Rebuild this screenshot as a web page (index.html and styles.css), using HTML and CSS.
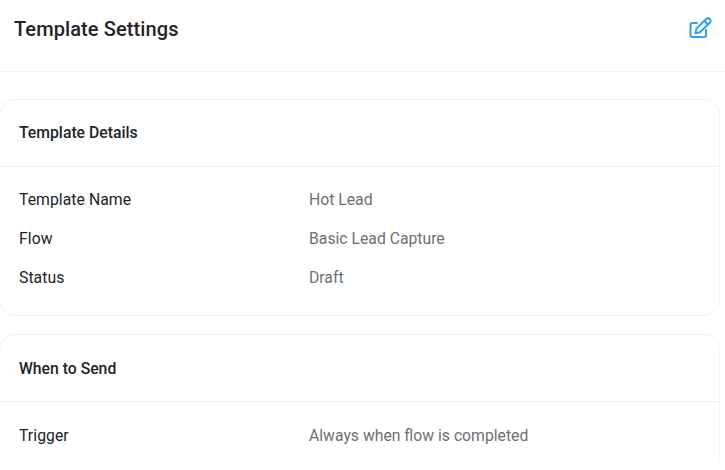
FILE: index.html
```html
<!DOCTYPE html>
<html lang="en">
<head>
<meta charset="utf-8">
<title>Template Settings</title>
<link rel="stylesheet" href="styles.css">
</head>
<body>
<div class="page">
  <header class="header">
    <h1 class="title">Template Settings</h1>
    <svg class="edit-icon" viewBox="0 0 24 24" fill="none" stroke="#2f9ff5" stroke-width="2" stroke-linecap="round" stroke-linejoin="round" aria-hidden="true">
      <path d="M9 7H4.5a2 2 0 0 0-2 2v10a2 2 0 0 0 2 2H16a2 2 0 0 0 2-2v-5"/>
      <path d="M18.2 3a2.6 2.6 0 0 1 3.7 3.7L12 16.2l-4.6 1 1-4.6z"/>
      <path d="M16.5 5l3 3"/>
    </svg>
  </header>
  <main class="content">
    <section class="card">
      <h2 class="card-title">Template Details</h2>
      <dl class="rows">
        <div class="row"><dt>Template Name</dt><dd>Hot Lead</dd></div>
        <div class="row"><dt>Flow</dt><dd>Basic Lead Capture</dd></div>
        <div class="row"><dt>Status</dt><dd>Draft</dd></div>
      </dl>
    </section>
    <section class="card">
      <h2 class="card-title">When to Send</h2>
      <dl class="rows rows-send">
        <div class="row"><dt>Trigger</dt><dd>Always when flow is completed</dd></div>
      </dl>
    </section>
  </main>
</div>
</body>
</html>
```
FILE: styles.css
```css
html, body {
  margin: 0;
  padding: 0;
  height: 100%;
  overflow: hidden;
  background: #fff;
}
.page {
  width: 725px;
  height: 463px;
  overflow: hidden;
  font-family: Roboto, "Liberation Sans", sans-serif;
  color: #212529;
}
.header {
  box-sizing: border-box;
  height: 72px;
  display: flex;
  align-items: center;
  justify-content: space-between;
  padding: 0 13px 13px 14px;
  border-bottom: 1px solid #eef1f5;
}
.title {
  margin: 0;
  font-size: 20px;
  font-weight: 500;
  line-height: 28px;
  letter-spacing: 0.1px;
}
.edit-icon {
  width: 24px;
  height: 24px;
  margin-bottom: 2px;
}
.content {
  display: flex;
  flex-direction: column;
  gap: 18.9px;
  padding: 26.5px 5px 0 0;
}
.card {
  margin-left: -1px;
  border: 1px solid #e8f3fd;
  border-radius: 16px;
  background: #fff;
}
.card-title {
  margin: 0;
  height: 67px;
  box-sizing: border-box;
  padding: 0 19px;
  display: flex;
  align-items: center;
  font-size: 15.75px;
  font-weight: 500;
  border-bottom: 1px solid #e8f3fd;
}
.rows {
  margin: 0;
  padding: 17px 19px 21px;
  display: flex;
  flex-direction: column;
  gap: 7px;
}
.rows-send {
  padding-top: 18px;
}
.row {
  display: grid;
  grid-template-columns: 290px 1fr;
  line-height: 32px;
  font-size: 15.75px;
}
.row dt { font-weight: 450; letter-spacing: 0.05px; color: #212529; }
.row dd { margin: 0; color: #6c6f73; }
```
